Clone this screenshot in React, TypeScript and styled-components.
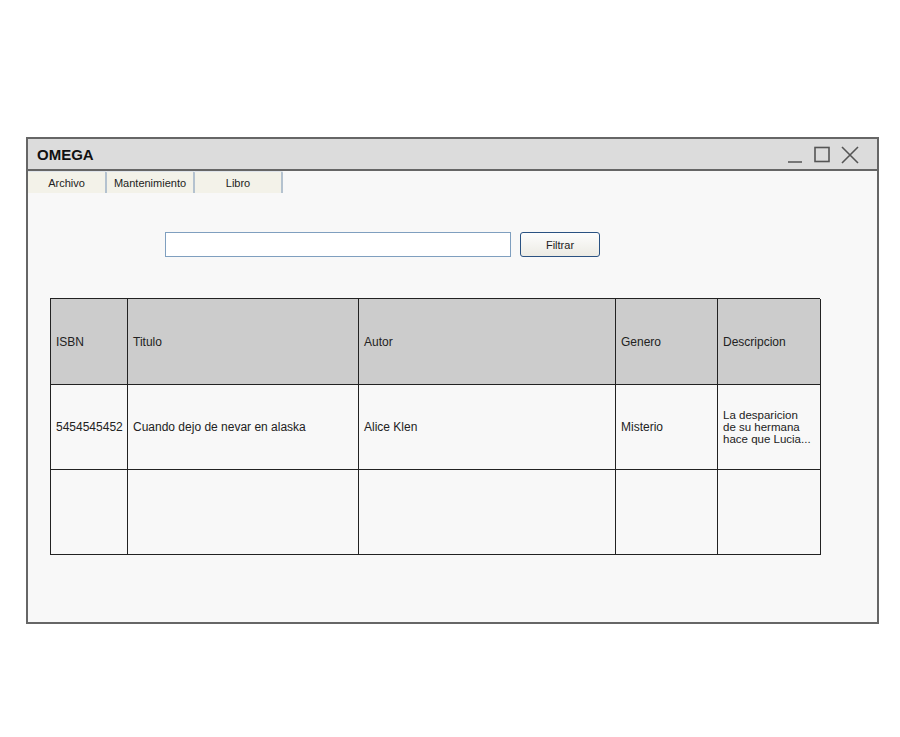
import React from "react";
import styled, { createGlobalStyle } from "styled-components";

const Global = createGlobalStyle`
  html, body { margin: 0; padding: 0; background: #ffffff; }
  body { font-family: "Liberation Sans", Arial, sans-serif; }
`;

const Page = styled.div`
  padding: 137px 0 0 26px;
  height: 737px;
  box-sizing: border-box;
`;

const Window = styled.div`
  width: 853px;
  height: 487px;
  box-sizing: border-box;
  border: 2px solid #666666;
  background: #f8f8f8;
  display: flex;
  flex-direction: column;
`;

const TitleBar = styled.div`
  height: 30px;
  background: #dcdcdc;
  border-bottom: 2px solid #666666;
  display: flex;
  align-items: center;
  justify-content: space-between;
  padding: 0 18px 0 9px;
`;

const Title = styled.div`
  font-family: "Liberation Sans", Arial, sans-serif;
  font-weight: bold;
  font-size: 15px;
  color: #111;
`;

const Controls = styled.div`
  display: flex;
  align-items: center;
  gap: 11px;
  padding-top: 2px;
`;

const Tabs = styled.div`
  display: flex;
  height: 22px;
`;

const Tab = styled.div<{ $w: number }>`
  width: ${(p) => p.$w}px;
  box-sizing: border-box;
  background: #f3f2e9;
  border-right: 2px solid #b4c2cf;
  border-top: 1px solid #dfe4ea;
  border-top-right-radius: 2px;
  display: flex;
  align-items: center;
  justify-content: center;
  font-family: "Liberation Sans", Tahoma, sans-serif;
  font-size: 11px;
  color: #222;
`;

const FilterRow = styled.div`
  display: flex;
  align-items: center;
  gap: 9px;
  margin: 39px 0 0 137px;
`;

const SearchInput = styled.input`
  width: 346px;
  height: 25px;
  box-sizing: border-box;
  border: 1px solid #7f9fbf;
  background: #ffffff;
  outline: none;
  padding: 0 4px;
`;

const Button = styled.button`
  width: 80px;
  height: 25px;
  box-sizing: border-box;
  border: 1px solid #2a5282;
  border-radius: 3px;
  background: linear-gradient(#fdfdfd, #ecebe4);
  font-family: "Liberation Sans", Tahoma, sans-serif;
  font-size: 11px;
  color: #222;
  padding: 0;
`;

const Grid = styled.div`
  margin: 41px 0 0 22px;
  display: grid;
  grid-template-columns: 77px 231px 257px 102px 103px;
  grid-template-rows: 86px 85px 85px;
  width: 770px;
  box-sizing: border-box;
  border-top: 1px solid #222;
  border-left: 1px solid #222;
`;

const Cell = styled.div<{ $head?: boolean }>`
  box-sizing: border-box;
  border-right: 1px solid #222;
  border-bottom: 1px solid #222;
  background: ${(p) => (p.$head ? "#cccccc" : "#f8f8f8")};
  display: flex;
  align-items: center;
  padding-left: 5px;
  font-family: "Liberation Sans", "DejaVu Sans", sans-serif;
  font-size: 12px;
  color: #222;
  white-space: nowrap;
`;

const Desc = styled.div`
  font-size: 11.5px;
  line-height: 12px;
  white-space: nowrap;
`;

const headers = ["ISBN", "Titulo", "Autor", "Genero", "Descripcion"];

export default function App() {
  return (
    <>
      <Global />
      <Page>
        <Window>
          <TitleBar>
            <Title>OMEGA</Title>
            <Controls>
              <svg width="16" height="18" viewBox="0 0 16 18">
                <line x1="1" y1="16" x2="15" y2="16" stroke="#555" strokeWidth="1.5" />
              </svg>
              <svg width="16" height="18" viewBox="0 0 16 18">
                <rect x="1" y="1.5" width="14" height="14" fill="none" stroke="#555" strokeWidth="1.6" />
              </svg>
              <svg width="18" height="18" viewBox="0 0 18 18">
                <path d="M1 1 L17 17 M17 1 L1 17" stroke="#555" strokeWidth="1.6" />
              </svg>
            </Controls>
          </TitleBar>
          <Tabs>
            <Tab $w={79}>Archivo</Tab>
            <Tab $w={88}>Mantenimiento</Tab>
            <Tab $w={88}>Libro</Tab>
          </Tabs>
          <FilterRow>
            <SearchInput />
            <Button>Filtrar</Button>
          </FilterRow>
          <Grid>
            {headers.map((h) => (
              <Cell key={h} $head>
                {h}
              </Cell>
            ))}
            <Cell>5454545452</Cell>
            <Cell>Cuando dejo de nevar en alaska</Cell>
            <Cell>Alice Klen</Cell>
            <Cell>Misterio</Cell>
            <Cell>
              <Desc>
                La desparicion
                <br />
                de su hermana
                <br />
                hace que Lucia...
              </Desc>
            </Cell>
            <Cell />
            <Cell />
            <Cell />
            <Cell />
            <Cell />
          </Grid>
        </Window>
      </Page>
    </>
  );
}
